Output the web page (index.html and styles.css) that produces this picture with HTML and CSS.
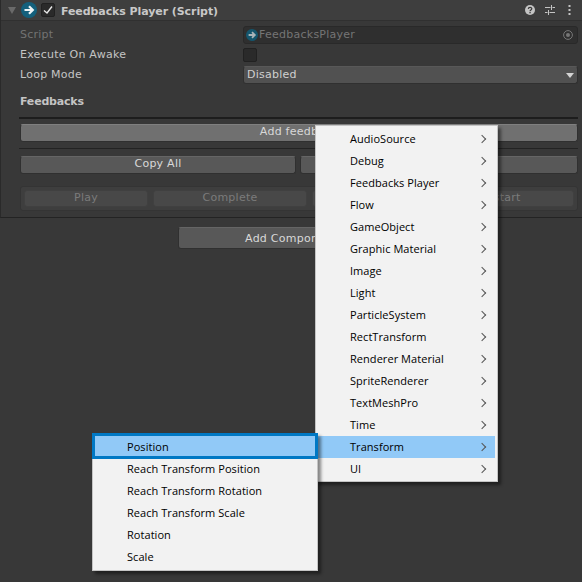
FILE: index.html
```html
<!DOCTYPE html>
<html lang="en">
<head>
    <meta charset="UTF-8">
    <meta name="viewport" content="width=device-width, initial-scale=1.0">
    <title>Feedbacks Player</title>
    <link rel="stylesheet" href="styles.css">
</head>
<body>
    <div class="inspector">
        <div class="header">
            <svg class="foldout" width="8" height="7" viewBox="0 0 8 7"><path d="M0 0H8L4 7Z" fill="#6a6a6a"/></svg>
            <svg class="script-icon" width="16" height="16" viewBox="0 0 16 16">
                <circle cx="8" cy="8" r="8" fill="#14607c"/>
                <path d="M3.5 8H11M8 4.2L11.8 8L8 11.8" fill="none" stroke="#eef4f6" stroke-width="2.2"/>
            </svg>
            <span class="checkbox header-check">
                <svg width="10" height="10" viewBox="0 0 10 10"><path d="M1 5.5L4 8L9 1.5" fill="none" stroke="#e8e8e8" stroke-width="1.4"/></svg>
            </span>
            <span class="title">Feedbacks Player (Script)</span>
            <span class="header-icons">
                <svg width="10" height="10" viewBox="0 0 10 10">
                    <circle cx="5" cy="5" r="5" fill="#c4c4c4"/>
                    <path d="M3.3 3.9C3.4 1.9 6.8 1.9 6.8 3.7C6.8 4.9 5 4.9 5 6.2" fill="none" stroke="#383838" stroke-width="1.2"/>
                    <rect x="4.4" y="7" width="1.3" height="1.3" fill="#383838"/>
                </svg>
                <svg width="10" height="10" viewBox="0 0 10 10">
                    <path d="M0 2.5H5.5M7.5 2.5H10M0 7.5H2.5M4.5 7.5H10M6.5 0V5M3.5 5V10" fill="none" stroke="#c4c4c4" stroke-width="1"/>
                </svg>
                <svg class="dots" width="3" height="10" viewBox="0 0 3 10">
                    <path d="M0.5 0H2.5V2H0.5ZM0.5 4H2.5V6H0.5ZM0.5 8H2.5V10H0.5Z" fill="#c4c4c4"/>
                </svg>
            </span>
        </div>

        <div class="fields">
            <div class="row">
                <span class="label dim">Script</span>
                <div class="object-field">
                    <svg width="12" height="12" viewBox="0 0 16 16">
                        <circle cx="8" cy="8" r="8" fill="#14566e"/>
                        <path d="M3.5 8H11M8 4.2L11.8 8L8 11.8" fill="none" stroke="#a9b4b9" stroke-width="2.4"/>
                    </svg>
                    <span class="value">FeedbacksPlayer</span>
                    <svg class="picker" width="10" height="10" viewBox="0 0 10 10">
                        <circle cx="5" cy="5" r="4.4" fill="none" stroke="#777" stroke-width="1"/>
                        <circle cx="5" cy="5" r="2" fill="#777"/>
                    </svg>
                </div>
            </div>
            <div class="row">
                <span class="label">Execute On Awake</span>
                <span class="checkbox"></span>
            </div>
            <div class="row">
                <span class="label">Loop Mode</span>
                <div class="dropdown">
                    <span class="value">Disabled</span>
                    <svg width="8" height="5" viewBox="0 0 8 5"><path d="M0 0H8L4 5Z" fill="#d4d4d4"/></svg>
                </div>
            </div>
        </div>

        <div class="section-title">Feedbacks</div>
        <div class="rule thick"></div>
        <div class="btn add-feedback">Add feedback</div>
        <div class="rule"></div>
        <div class="btn-row">
            <div class="btn copy-all">Copy All</div>
            <div class="btn paste-all"></div>
        </div>
        <div class="play-box">
            <div class="btn off play">Play</div>
            <div class="btn off complete">Complete</div>
            <div class="btn off stop"></div>
            <div class="btn off restart">Restart</div>
        </div>
    </div>

    <div class="add-component-wrap">
        <div class="btn add-component">Add Component</div>
    </div>

    <div class="menu menu-main">
        <div class="item">AudioSource<i class="arrow"></i></div>
        <div class="item">Debug<i class="arrow"></i></div>
        <div class="item">Feedbacks Player<i class="arrow"></i></div>
        <div class="item">Flow<i class="arrow"></i></div>
        <div class="item">GameObject<i class="arrow"></i></div>
        <div class="item">Graphic Material<i class="arrow"></i></div>
        <div class="item">Image<i class="arrow"></i></div>
        <div class="item">Light<i class="arrow"></i></div>
        <div class="item">ParticleSystem<i class="arrow"></i></div>
        <div class="item">RectTransform<i class="arrow"></i></div>
        <div class="item">Renderer Material<i class="arrow"></i></div>
        <div class="item">SpriteRenderer<i class="arrow"></i></div>
        <div class="item">TextMeshPro<i class="arrow"></i></div>
        <div class="item">Time<i class="arrow"></i></div>
        <div class="item active">Transform<i class="arrow"></i></div>
        <div class="item">UI<i class="arrow"></i></div>
    </div>

    <div class="menu menu-sub">
        <div class="item focused">Position</div>
        <div class="item">Reach Transform Position</div>
        <div class="item">Reach Transform Rotation</div>
        <div class="item">Reach Transform Scale</div>
        <div class="item">Rotation</div>
        <div class="item">Scale</div>
    </div>
</body>
</html>
```

FILE: styles.css
```css
html, body {
    height: 100%;
}
body {
    margin: 0;
    overflow: hidden;
    background-color: #383838;
    color: #c4c4c4;
    font-family: "DejaVu Sans", sans-serif;
    font-size: 11px;
    letter-spacing: 0.25px;
}
.inspector {
    height: 218px;
    box-sizing: border-box;
    border-left: 1px solid #2a2a2a;
    border-bottom: 1px solid #232323;
}
.header {
    display: flex;
    align-items: center;
    height: 20px;
    padding: 0 11px 0 7px;
    background-color: #3e3e3e;
    border-bottom: 1px solid #303030;
}
.foldout {
    margin-right: 5px;
}
.script-icon {
    margin-right: 4px;
}
.checkbox {
    display: flex;
    align-items: center;
    justify-content: center;
    box-sizing: border-box;
    width: 14px;
    height: 14px;
    background-color: #2a2a2a;
    border: 1px solid #212121;
    border-radius: 2px;
}
.header-check {
    margin-right: 6px;
}
.title {
    padding-top: 2px;
    font-weight: bold;
    letter-spacing: -0.08px;
    color: #c8c8c8;
}
.header-icons {
    display: flex;
    align-items: center;
    gap: 10px;
    margin-left: auto;
}
.dots {
    margin-left: 3px;
}
.fields {
    padding: 4px 4px 0 19px;
}
.row {
    display: grid;
    grid-template-columns: 223px 1fr;
    align-items: center;
    height: 20px;
}
.label, .value {
    padding-bottom: 2px;
}
.dim {
    color: #737373;
}
.object-field {
    display: flex;
    align-items: center;
    gap: 1px;
    height: 16px;
    padding: 0 4px 0 2px;
    background-color: #2f2f2f;
    border: 1px solid #292929;
    border-radius: 3px;
    color: #757575;
}
.picker {
    margin-left: auto;
}
.dropdown {
    display: flex;
    align-items: center;
    justify-content: space-between;
    height: 16px;
    padding: 0 3px 0 3px;
    background-color: #515151;
    border: 1px solid #303030;
    border-top-color: #585858;
    border-radius: 3px;
    color: #d0d0d0;
}
.section-title {
    margin: 10px 0 0 19px;
    font-weight: bold;
    letter-spacing: -0.2px;
    line-height: 14px;
}
.rule {
    height: 1px;
    margin: 6px 4px 7px 18px;
    background-color: #232323;
}
.rule.thick {
    height: 2px;
    margin: 8px 4px 5px 18px;
    background-color: #1d1d1d;
}
.btn {
    box-sizing: border-box;
    height: 18px;
    line-height: 14px;
    text-align: center;
    background-color: #585858;
    border: 1px solid #303030;
    border-top-color: #656565;
    border-radius: 3px;
    color: #d8d8d8;
}
.add-feedback {
    margin: 0 4px 0 19px;
    background-color: #707070;
    border-top-color: #808080;
}
.btn-row {
    display: flex;
    gap: 4px;
    margin: 0 4px 0 19px;
}
.copy-all {
    width: 276px;
}
.paste-all {
    flex: 1;
}
.play-box {
    display: flex;
    gap: 5px;
    box-sizing: border-box;
    height: 25px;
    margin: 12px 4px 0 19px;
    padding: 3px;
    background-color: #3e3e3e;
    border: 1px solid #343434;
    border-radius: 3px;
}
.btn.off {
    height: 17px;
    background-color: #484848;
    border-color: #404040;
    color: #7b7b7b;
}
.play {
    width: 124px;
}
.complete {
    width: 154px;
}
.stop {
    width: 109px;
}
.restart {
    flex: 1;
}
.add-component-wrap {
    display: flex;
    padding-top: 9px;
}
.add-component {
    width: 226px;
    height: 22px;
    line-height: 21px;
    margin-left: 178px;
}
.menu {
    position: absolute;
    box-sizing: border-box;
    padding: 2px;
    background-color: #f2f2f2;
    border: 1px solid #c4c4c4;
    box-shadow: 3px 3px 3px rgba(0, 0, 0, 0.45);
    font-family: "Open Sans", sans-serif;
    font-size: 11px;
    letter-spacing: 0.05px;
    color: #000;
}
.menu-main {
    left: 315px;
    top: 125px;
    width: 183px;
    height: 357px;
}
.menu-sub {
    left: 92px;
    top: 433px;
    width: 226px;
    height: 138px;
    padding: 0 1px;
}
.item {
    position: relative;
    height: 22px;
    line-height: 22px;
    padding-left: 32px;
}
.menu-sub .item {
    padding-left: 33px;
}
.item.active {
    background-color: #91c9f7;
}
.menu-sub .item.focused {
    box-sizing: border-box;
    height: 26px;
    margin: -1px -2px -1px;
    padding-left: 32px;
    line-height: 21px;
    background-color: #91c9f7;
    border: 3px solid #0078c4;
}
.arrow {
    position: absolute;
    top: 8px;
    right: 10px;
    width: 5px;
    height: 5px;
    border-top: 1px solid #555;
    border-right: 1px solid #555;
    transform: rotate(45deg);
}
```
